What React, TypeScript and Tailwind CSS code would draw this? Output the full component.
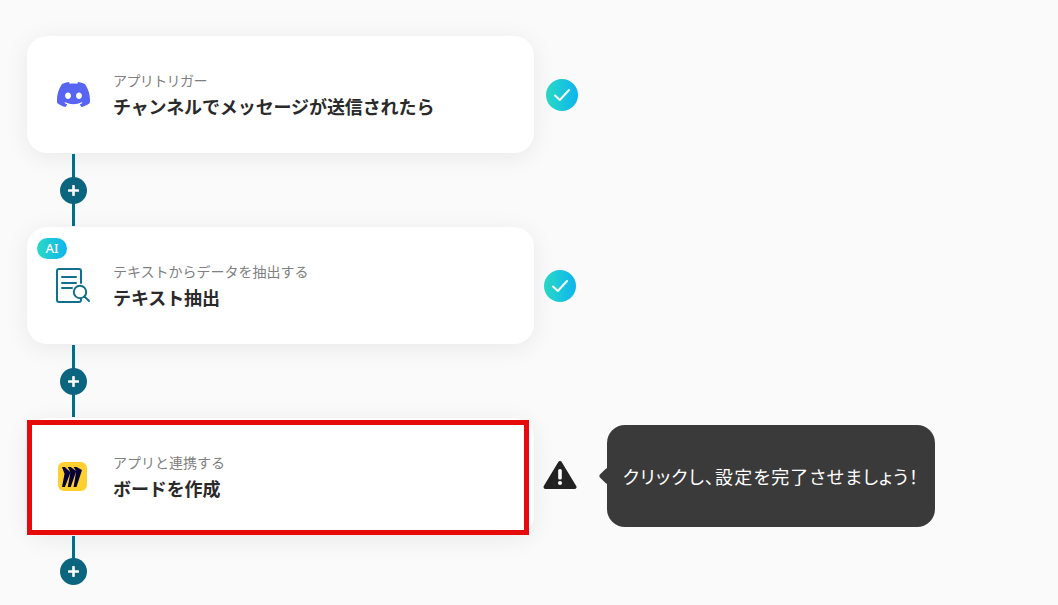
import React, { FC, ReactNode } from "react";
import { SiDiscord, SiMiro } from "react-icons/si";

const CheckBadge: FC<{ className: string }> = ({ className }) => (
  <div
    className={`flex h-8 w-8 items-center justify-center rounded-full bg-gradient-to-r from-[#2bd9c4] to-[#0fb4ee] ${className}`}
  >
    <svg width="18" height="14" viewBox="0 0 18 14" fill="none">
      <path d="M2 7.5 L6.8 12 L16 2" stroke="white" strokeWidth="2" strokeLinecap="round" strokeLinejoin="round" />
    </svg>
  </div>
);

const Connector: FC<{ height: string; plusTop: string }> = ({ height, plusTop }) => (
  <div className={`relative my-[1px] ml-[45px] w-[3px] bg-[#00708a] ${height}`}>
    <div
      className={`absolute left-[-12px] flex h-[27px] w-[27px] items-center justify-center rounded-full bg-[#0b657f] ${plusTop}`}
    >
      <svg width="11" height="11" viewBox="0 0 11 11">
        <path d="M5.5 1 V10 M1 5.5 H10" stroke="white" strokeWidth="2.6" strokeLinecap="round" />
      </svg>
    </div>
  </div>
);

const Card: FC<{ icon: ReactNode; label: string; title: string; labelClass?: string; children?: ReactNode }> = ({
  icon,
  label,
  title,
  labelClass,
  children,
}) => (
  <div className="relative flex h-[117px] w-[507px] items-center rounded-[20px] bg-white shadow-[0_4px_24px_rgba(0,0,0,0.07)]">
    <div className="flex w-[86px] justify-center pl-[6px]">{icon}</div>
    <div className="flex flex-col">
      <div className={`text-[14px] leading-[20px] text-[#808080] ${labelClass ?? ""}`}>{label}</div>
      <div className="mt-[2px] text-[18px] font-bold leading-[28px] tracking-[-0.1px] text-[#2a2a2a]">{title}</div>
    </div>
    {children}
  </div>
);

const DocIcon = () => (
  <svg width="35" height="36" viewBox="0 0 35 36" fill="none" stroke="#12708a" strokeWidth="2" className="mt-[1px]">
    <path
      d="M25 15 V3 a2 2 0 0 0 -2 -2 H3 a2 2 0 0 0 -2 2 V32 a2 2 0 0 0 2 2 H23 a2 2 0 0 0 2 -2 V31"
      strokeLinecap="round"
    />
    <path d="M6 9 H20 M6 15 H20 M6 20 H16" strokeLinecap="round" />
    <circle cx="24" cy="24" r="6.2" />
    <path d="M28.5 28.5 L33 33" strokeLinecap="round" />
  </svg>
);

const MiroIcon = () => (
  <div className="ml-[-2px] flex h-[29px] w-[29px] items-center justify-center rounded-[6px] bg-[#ffd02f]">
    <SiMiro size={20} color="#050038" />
  </div>
);

const App: FC = () => {
  return (
    <div className="h-[605px] w-[1058px] overflow-hidden bg-[#fafafa] pl-[27px] pt-[36px] font-['Noto_Sans_CJK_JP','Noto_Sans',sans-serif]">
      <div className="relative flex items-center">
        <Card
          icon={<SiDiscord size={33} color="#5865f2" />}
          label="アプリトリガー"
          labelClass="tracking-[-0.6px]"
          title="チャンネルでメッセージが送信されたら"
        />
        <CheckBadge className="ml-[12px]" />
      </div>
      <Connector height="h-[72px]" plusTop="top-[23px]" />
      <div className="relative flex items-center">
        <Card icon={<DocIcon />} label="テキストからデータを抽出する" title="テキスト抽出">
          <div className="absolute left-[10px] top-[11px] flex h-[21px] w-[30px] items-center justify-center rounded-full bg-gradient-to-r from-[#2bd9c4] to-[#0fb4ee] font-['Noto_Sans',sans-serif] text-[13px] font-medium text-white">
            AI
          </div>
        </Card>
        <CheckBadge className="ml-[10px]" />
      </div>
      <Connector height="h-[72px]" plusTop="top-[23px]" />
      <div className="relative flex items-center">
        <Card icon={<MiroIcon />} label="アプリと連携する" title="ボードを作成">
          <div className="absolute bottom-0 left-0 top-[2px] w-[502px] border-[5px] border-[#e60a0a]" />
        </Card>
        <svg width="34" height="30" viewBox="0 0 34 30" className="ml-[9px] mt-[-4px]">
          <path d="M17 3 L31.5 27 H2.5 Z" fill="#222222" stroke="#222222" strokeWidth="4" strokeLinejoin="round" />
          <rect x="15.2" y="9" width="3.6" height="10.5" rx="1.6" fill="white" />
          <circle cx="17" cy="23" r="2" fill="white" />
        </svg>
        <div className="relative ml-[30px] mt-[-1px] flex h-[102px] w-[328px] items-center justify-center rounded-[18px] bg-[#3a3a3a] text-[18px] tracking-[1.15px] text-white [font-feature-settings:'palt']">
          <div className="absolute left-[-6px] top-[45px] h-[12px] w-[12px] rotate-45 rounded-[2px] bg-[#3a3a3a]" />
          クリックし、設定を完了させましょう！
        </div>
      </div>
      <Connector height="h-[30px]" plusTop="top-[22px]" />
    </div>
  );
};

export default App;
